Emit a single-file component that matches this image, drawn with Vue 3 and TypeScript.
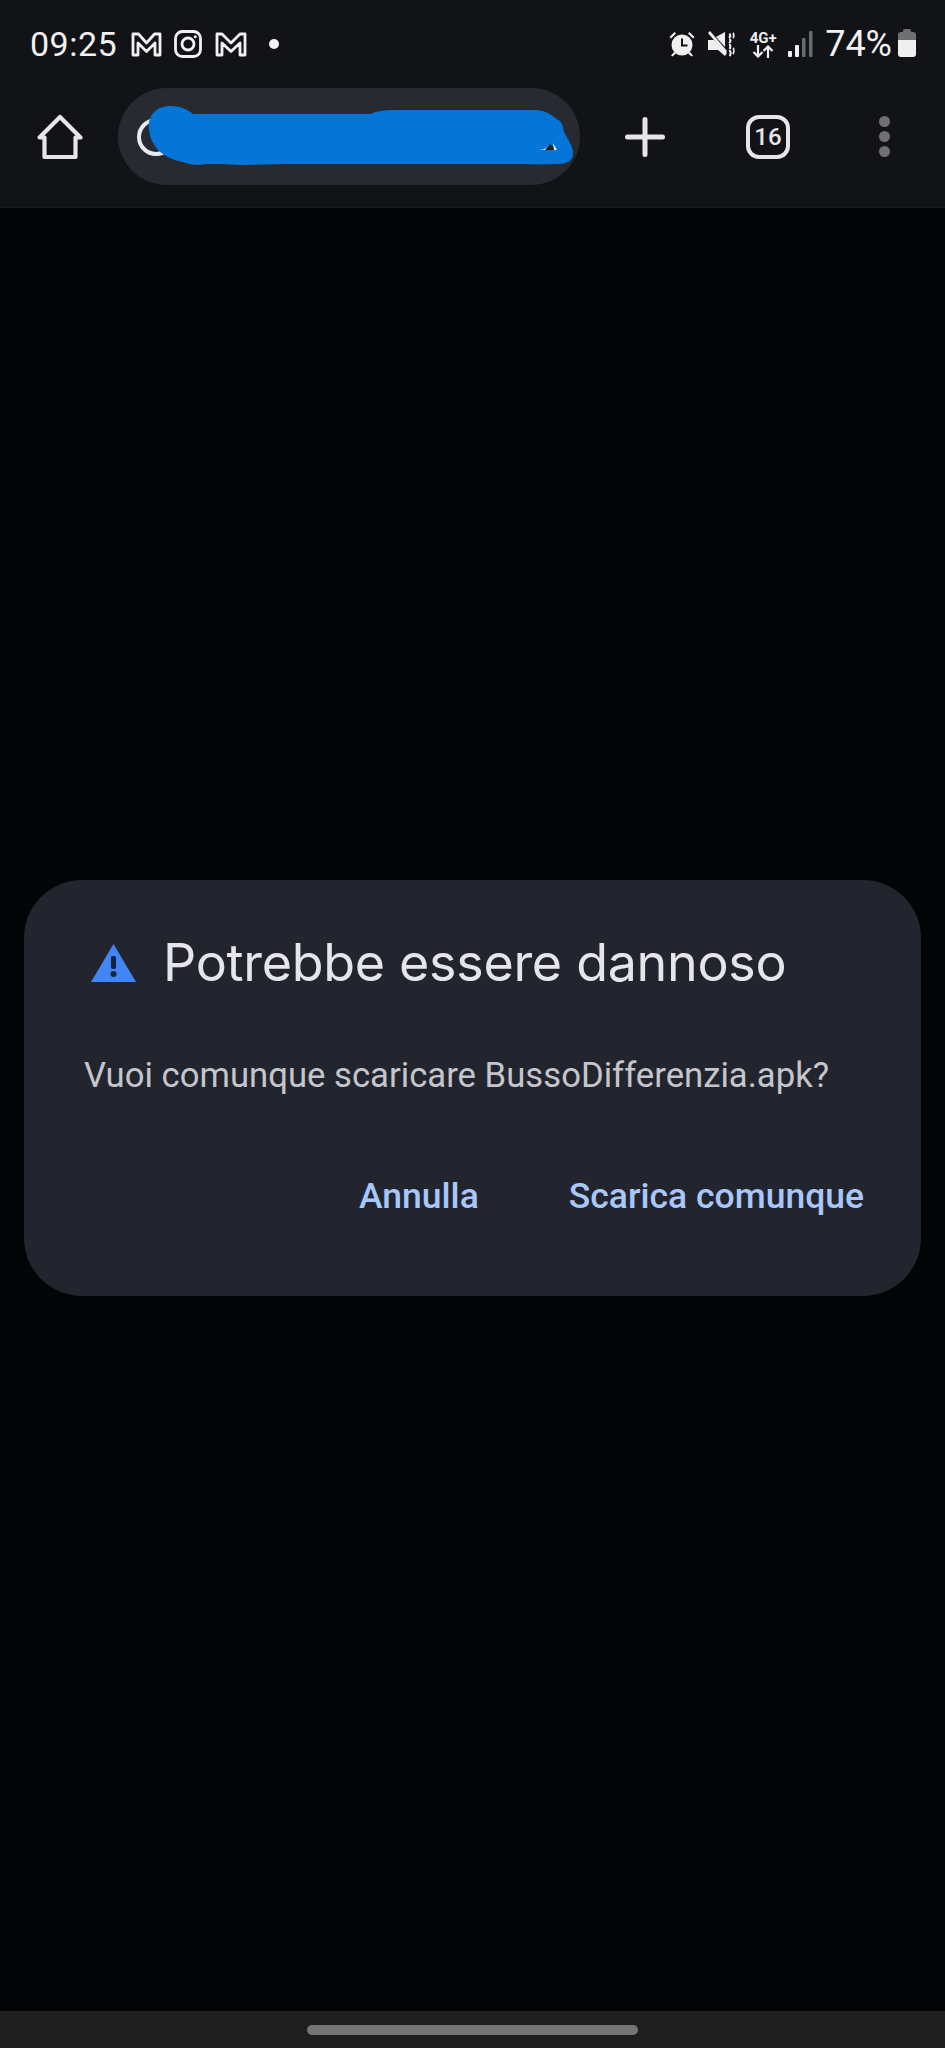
<script setup lang="ts">
const title = 'Potrebbe essere dannoso'
const message = 'Vuoi comunque scaricare BussoDifferenzia.apk?'
const actions = ['Annulla', 'Scarica comunque']
</script>

<template>
  <div class="screen">
    <header class="top">
      <div class="status">
        <div class="status-left">
          <span class="time">09:25</span>
          <svg width="31" height="25" viewBox="0 0 31 25" fill="none" stroke="#f1f1f1" stroke-width="2.800" stroke-linejoin="round">
            <path d="M2 2h5.500l8 9 8-9H29v21h-5V11l-8.500 8.500L7 11v12H2z" />
          </svg>
          <svg class="ic-insta" width="28" height="28" viewBox="0 0 28 28" fill="none" stroke="#f1f1f1" stroke-width="2.800">
            <rect x="1.500" y="1.500" width="25" height="25" rx="7" />
            <circle cx="14" cy="14" r="6" />
            <circle cx="21.300" cy="6.800" r="1.500" fill="#f1f1f1" stroke="none" />
          </svg>
          <svg class="ic-m2" width="32" height="25" viewBox="0 0 32 25" fill="none" stroke="#f1f1f1" stroke-width="2.800" stroke-linejoin="round">
            <path d="M2 2h5l9 9 9-9h5v21h-5V11l-9 8.500L7 11v12H2z" />
          </svg>
          <span class="dot"></span>
        </div>
        <div class="status-right">
          <svg width="26" height="26" viewBox="0 0 26 26" fill="#efefef">
            <circle cx="13" cy="14" r="10.500" />
            <path d="M0.500 6l5-5 1.500 1.500-5 5zM25.500 6l-5-5-1.500 1.500 5 5z" />
            <path d="M5 21l-3 3.500 1.500 1 3.500-3zM21 21l3 3.500-1.500 1-3.500-3z" />
            <path d="M12 7.500v8h6.500v-2H14v-6z" fill="#121317" />
          </svg>
          <svg class="ic-mute" width="28" height="26" viewBox="0 0 28 26" fill="#efefef">
            <path d="M1 9h6l13 13-2 3-7-6H1z" />
            <path d="M9 6l9-5v15z" />
            <path d="M1 2l2-2 17 20-2 2z" />
            <path d="M22 7c2-1.500 1.500-3 .5-4.500M22 12c2-1.500 2-2.500 .5-4M22.500 18c1.500-2 1-3.500 0-5M22.500 25c2-2 1.500-3.500 0-6" fill="none" stroke="#efefef" stroke-width="2" />
            <path d="M26 2c1 1 1 4 0 5M26 17c1 1 1 4 0 6" fill="none" stroke="#efefef" stroke-width="1.800" />
          </svg>
          <div class="net">
            <span class="net-label">4G+</span>
            <svg width="22" height="13" viewBox="0 0 22 13" fill="none" stroke="#efefef" stroke-width="2.200">
              <path d="M6 0v11M1.500 7L6 11.500 10.500 7" />
              <path d="M16 13V2M11.500 6L16 1.500 20.500 6" />
            </svg>
          </div>
          <svg class="ic-signal" width="25" height="27" viewBox="0 0 25 27">
            <rect x="0" y="20" width="4" height="6" rx="1" fill="#efefef" />
            <rect x="7" y="14" width="4" height="12" rx="1" fill="#efefef" />
            <rect x="14" y="7" width="3.500" height="19" rx="1" fill="#6a6b6d" />
            <rect x="21" y="0" width="3.500" height="26" rx="1" fill="#6a6b6d" />
          </svg>
          <span class="pct">74%</span>
          <div class="battery"></div>
        </div>
      </div>

      <div class="toolbar">
        <svg class="ic-home" width="46" height="46" viewBox="0 0 46 46" fill="none" stroke="#e6e6e9" stroke-width="4.200" stroke-linejoin="round" stroke-linecap="round">
          <path d="M2.500 23.500L23 3l20.500 20.500H38.500V43H7.500V23.500z" />
        </svg>
        <div class="omnibox">
          <span class="ring"></span>
          <svg class="scribble" width="462" height="97" viewBox="118 88 462 97">
            <path fill="#0576d8" d="M149 130C147 114 158 106 170 106C180 106 187 109 193 114H370C378 111 384 110 392 110H535C545 110 552 115 558 120C562 122 563 126 564 132C568 140 573 146 573 153C573 160 568 164 558 164C540 165 525 164 510 164H285L240 165C225 164 215 164 205 164C198 166 190 165 183 162C170 160 158 152 155 146C151 140 150 136 149 130z" />
            <path d="M537 150C543 150 546 149 549 145L547 150z" fill="#e9e9ee" />
            <path d="M550 144L557 150H545z" fill="#1c2026" />
            <path d="M553 143L557 150H554z" fill="#e9e9ee" />
          </svg>
        </div>
        <svg class="ic-plus" width="40" height="40" viewBox="0 0 40 40" stroke="#e6e6e9" stroke-width="5" stroke-linecap="round">
          <path d="M20 2.500v35M2.500 20h35" />
        </svg>
        <div class="tabs">16</div>
        <div class="more">
          <span></span>
          <span></span>
          <span></span>
        </div>
      </div>
    </header>

    <main class="content">
      <section class="dialog">
        <div class="heading">
          <svg width="45" height="38" viewBox="0 0 45 38">
            <path d="M22.500 0L45 38H0z" fill="#4285f4" />
            <rect x="20" y="12" width="5" height="13" rx="1.500" fill="#16233f" />
            <circle cx="22.500" cy="30" r="3" fill="#16233f" />
          </svg>
          <h1>{{ title }}</h1>
        </div>
        <p>{{ message }}</p>
        <div class="actions">
          <button v-for="action in actions" :key="action">{{ action }}</button>
        </div>
      </section>
    </main>

    <footer class="nav">
      <span class="handle"></span>
    </footer>
  </div>
</template>

<style scoped>
.screen {
  width: 945px;
  height: 2048px;
  display: flex;
  flex-direction: column;
  background: #030406;
  font-family: Roboto, "Liberation Sans", sans-serif;
  overflow: hidden;
}

.top {
  height: 207px;
  flex: none;
  background: #121317;
  border-bottom: 1px solid #1a1b1f;
  box-sizing: content-box;
}

.status {
  height: 88px;
  display: flex;
  align-items: center;
  justify-content: space-between;
  padding: 0 29px 0 30px;
}

.status-left,
.status-right {
  display: flex;
  align-items: center;
}

.time {
  font-size: 34px;
  letter-spacing: 0.5px;
  color: #f1f1f1;
  margin-right: 14px;
}

.ic-insta {
  margin-left: 12px;
}

.ic-m2 {
  margin-left: 13px;
}

.dot {
  width: 10px;
  height: 10px;
  border-radius: 50%;
  background: #f1f1f1;
  margin-left: 22px;
}

.ic-mute {
  margin-left: 12px;
}

.net {
  width: 30px;
  margin-left: 13px;
  display: flex;
  flex-direction: column;
  align-items: center;
}

.net-label {
  font-size: 15px;
  line-height: 14px;
  font-weight: 700;
  color: #efefef;
}

.ic-signal {
  margin-left: 10px;
}

.pct {
  font-size: 36px;
  color: #f1f1f1;
  margin-left: 12px;
}

.battery {
  width: 18px;
  height: 25px;
  margin-left: 6px;
  border-radius: 3px;
  position: relative;
  background: linear-gradient(#6f7072 0 8px, #efefef 8px);
}

.battery::before {
  content: "";
  position: absolute;
  left: 5px;
  top: -3px;
  width: 8px;
  height: 3px;
  border-radius: 2px 2px 0 0;
  background: #6f7072;
}

.toolbar {
  height: 97px;
  display: flex;
  align-items: center;
}

.ic-home {
  margin-left: 37px;
  flex: none;
}

.omnibox {
  position: relative;
  width: 462px;
  height: 97px;
  margin-left: 35px;
  border-radius: 49px;
  background: #272a31;
  flex: none;
}

.ring {
  position: absolute;
  left: 19px;
  top: 30px;
  width: 38px;
  height: 38px;
  border: 4.500px solid #e9e9ee;
  border-radius: 50%;
  box-sizing: border-box;
}

.scribble {
  position: absolute;
  left: 0;
  top: 0;
}

.ic-plus {
  margin-left: 45px;
  flex: none;
}

.tabs {
  width: 44px;
  height: 44px;
  margin-left: 81px;
  box-sizing: border-box;
  border: 4px solid #e6e6e9;
  border-radius: 13px;
  display: flex;
  align-items: center;
  justify-content: center;
  font-size: 24px;
  font-weight: 500;
  color: #e6e6e9;
  flex: none;
}

.more {
  margin-left: 89px;
  display: flex;
  flex-direction: column;
  gap: 4px;
}

.more span {
  width: 11px;
  height: 11px;
  border-radius: 50%;
  background: #6f7073;
}

.content {
  flex: 1;
  padding: 672px 24px 0;
}

.dialog {
  height: 416px;
  box-sizing: border-box;
  padding: 51px 57px 0 60px;
  border-radius: 58px;
  background: #23252e;
}

.heading {
  display: flex;
  align-items: center;
  gap: 27px;
  padding-left: 7px;
}

.heading svg {
  flex: none;
}

h1 {
  margin: 0;
  font-family: Inter, Roboto, sans-serif;
  font-size: 52px;
  line-height: 64px;
  font-weight: 400;
  letter-spacing: -0.3px;
  color: #e6e6ea;
}

p {
  margin: 58px 0 0;
  font-size: 34.700px;
  line-height: 44px;
  color: #c4c6cc;
}

.actions {
  display: flex;
  justify-content: flex-end;
  gap: 90px;
  margin-top: 77px;
}

button {
  padding: 0;
  border: 0;
  background: none;
  font-family: inherit;
  font-size: 35.500px;
  line-height: 44px;
  font-weight: 500;
  color: #a8c7fa;
}

.nav {
  height: 37px;
  flex: none;
  box-sizing: border-box;
  padding-top: 14px;
  display: flex;
  justify-content: center;
  background: #1f1f1f;
}

.handle {
  width: 331px;
  height: 10px;
  border-radius: 5px;
  background: #757575;
}
</style>
